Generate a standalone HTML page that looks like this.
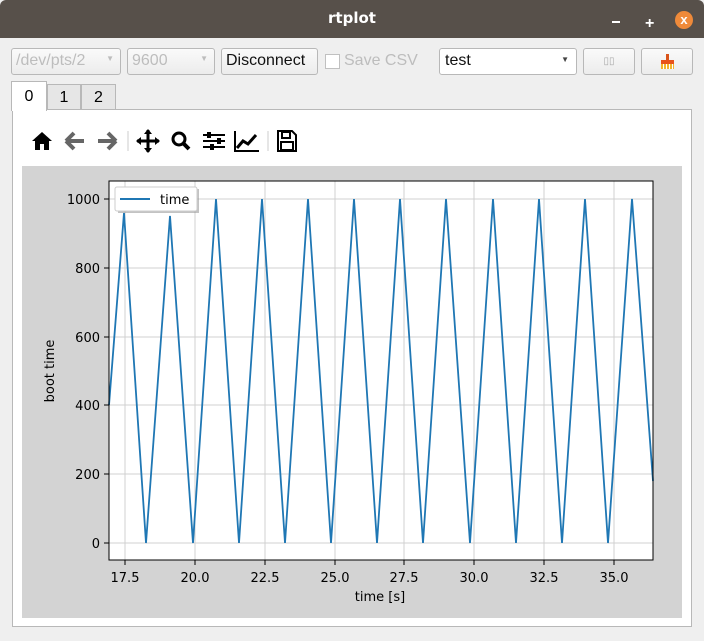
<!DOCTYPE html>
<html><head><style>
body{margin:0;width:704px;height:641px;background:#efefef;font-family:"Liberation Sans","DejaVu Sans",sans-serif;position:relative;overflow:hidden}
.a{position:absolute}
.btn{position:absolute;border:1px solid #b8b8b8;border-radius:3px;background:linear-gradient(#fafafa,#ececec);box-sizing:border-box;font-size:16px}
.dis{color:#bdbdbd}
.tab{position:absolute;border:1px solid #b8b8b8;border-bottom:none;box-sizing:border-box;font-size:16px;text-align:center;background:#e6e6e6}
</style></head><body>
<div class="a" style="left:0;top:0;width:704px;height:38px;background:#57504a;border-radius:6px 6px 0 0"></div>
<div class="a" style="left:0;top:9px;width:704px;text-align:center;color:#fff;font-weight:bold;font-size:15px;font-family:'DejaVu Sans',sans-serif">rtplot</div>
<div class="a" style="left:612px;top:21px;width:8px;height:2px;background:#fff"></div>
<div class="a" style="left:645px;top:15px;color:#fff;font-weight:bold;font-size:16px">+</div>
<div class="a" style="left:675px;top:11px;width:18px;height:18px;border-radius:50%;background:#ef8a3a;color:#fff;font-size:13px;font-weight:bold;text-align:center;line-height:18px">x</div>

<div class="btn dis" style="left:11px;top:48px;width:110px;height:27px;padding:3px 4px">/dev/pts/2<span style="position:absolute;right:6px;top:5px;font-size:8px">▼</span></div>
<div class="btn dis" style="left:127px;top:48px;width:88px;height:27px;padding:3px 4px">9600<span style="position:absolute;right:6px;top:5px;font-size:8px">▼</span></div>
<div class="btn" style="left:221px;top:48px;width:97px;height:27px;padding:3px 4px;color:#111">Disconnect</div>
<div class="a" style="left:325px;top:54px;width:13px;height:13px;border:1px solid #c0c0c0;background:#fff"></div>
<div class="a dis" style="left:344px;top:52px;font-size:16px">Save CSV</div>
<div class="btn" style="left:439px;top:48px;width:138px;height:27px;padding:3px 5px;color:#111;background:#fff">test<span style="position:absolute;right:7px;top:6px;font-size:8px;color:#444">▼</span></div>
<div class="btn" style="left:583px;top:48px;width:52px;height:27px;text-align:center;color:#aaa;font-size:10px;line-height:25px">▯▯</div>
<div class="btn" style="left:641px;top:48px;width:52px;height:27px"><div class="a" style="left:24px;top:5px;width:3px;height:7px;background:#d9541a"></div><div class="a" style="left:19px;top:11px;width:13px;height:4px;background:#e8531c"></div><div class="a" style="left:19px;top:15px;width:13px;height:5px;background:repeating-linear-gradient(90deg,#f3b42c 0 2px,#fff 2px 3px)"></div></div>

<div class="a" style="left:12px;top:109px;width:680px;height:518px;background:#fff;border:1px solid #b8b8b8;box-sizing:border-box"></div>
<div class="tab" style="left:11px;top:81px;width:36px;height:30px;background:#fff;line-height:30px">0</div>
<div class="tab" style="left:47px;top:84px;width:34px;height:25px;line-height:25px">1</div>
<div class="tab" style="left:81px;top:84px;width:35px;height:25px;line-height:25px">2</div>

<svg class="a" style="left:28px;top:126px" width="280" height="30" viewBox="0 0 280 30">
<path d="M4 15 L14 6 L24 15 L21 15 L21 24 L16 24 L16 18 L12 18 L12 24 L7 24 L7 15Z" fill="#000"/>
<path d="M38 15 L46 7 M38 15 L46 23 M38 15 L56 15" stroke="#666" stroke-width="4" fill="none"/>
<path d="M88 15 L80 7 M88 15 L80 23 M88 15 L70 15" stroke="#666" stroke-width="4" fill="none"/>
<line x1="100" y1="5" x2="100" y2="25" stroke="#ccc"/>
<path d="M120 4 V26 M109 15 H131" stroke="#000" stroke-width="3"/><path d="M120 3 L116 8 H124Z M120 27 L116 22 H124Z M108 15 L113 11 V19Z M132 15 L127 11 V19Z" fill="#000"/>
<circle cx="151" cy="13" r="6" stroke="#000" stroke-width="3" fill="none"/><path d="M155 17 L161 23" stroke="#000" stroke-width="4"/>
<path d="M175 9 H197 M175 15 H197 M175 21 H197" stroke="#000" stroke-width="2"/><rect x="179" y="6" width="4" height="6" fill="#000"/><rect x="189" y="12" width="4" height="6" fill="#000"/><rect x="182" y="18" width="4" height="6" fill="#000"/>
<path d="M207 5 V25 H231" stroke="#000" stroke-width="2" fill="none"/><path d="M209 22 L215 15 L220 18 L228 9" stroke="#000" stroke-width="3" fill="none"/>
<line x1="240" y1="5" x2="240" y2="25" stroke="#ccc"/>
<path d="M250 5 H264 L268 9 V25 H250Z" stroke="#000" stroke-width="2" fill="none"/><rect x="254" y="6" width="8" height="6" stroke="#000" stroke-width="2" fill="none"/><rect x="253" y="16" width="12" height="8" stroke="#000" stroke-width="2" fill="none"/>
</svg>

<svg class="a" style="left:22px;top:166px" width="660" height="452" viewBox="22 166 660 452" font-family="DejaVu Sans, sans-serif" font-size="13">
<rect x="22" y="166" width="660" height="452" fill="#d3d3d3"/>
<rect x="109" y="181" width="544" height="379" fill="#fff"/>
<g stroke="#d0d0d0" stroke-width="1">
<line x1="125" y1="181" x2="125" y2="560"/><line x1="195" y1="181" x2="195" y2="560"/><line x1="265" y1="181" x2="265" y2="560"/><line x1="335" y1="181" x2="335" y2="560"/><line x1="404" y1="181" x2="404" y2="560"/><line x1="474" y1="181" x2="474" y2="560"/><line x1="544" y1="181" x2="544" y2="560"/><line x1="614" y1="181" x2="614" y2="560"/>
<line x1="109" y1="543" x2="653" y2="543"/><line x1="109" y1="474" x2="653" y2="474"/><line x1="109" y1="405" x2="653" y2="405"/><line x1="109" y1="337" x2="653" y2="337"/><line x1="109" y1="268" x2="653" y2="268"/><line x1="109" y1="199" x2="653" y2="199"/>
</g>
<polyline fill="none" stroke="#1f77b4" stroke-width="1.8" points="109,405 124,213 146,543 170,216 193,543 216,199 239,543 262,199 285,543 308,199 331,543 354,199 377,543 400,199 423,543 446,199 470,543 493,199 516,543 539,199 562,543 585,199 608,543 632,199 653,481"/>
<rect x="109" y="181" width="544" height="379" fill="none" stroke="#000" stroke-width="1"/>
<rect x="118" y="189" width="81" height="24" fill="#888" opacity=".5"/>
<rect x="115" y="187" width="82" height="24" rx="2" fill="#fff" stroke="#ccc"/>
<line x1="120" y1="199" x2="150" y2="199" stroke="#1f77b4" stroke-width="2"/>
<text x="160" y="204">time</text>
<g stroke="#000"><line x1="104" y1="543" x2="109" y2="543"/><line x1="104" y1="474" x2="109" y2="474"/><line x1="104" y1="405" x2="109" y2="405"/><line x1="104" y1="337" x2="109" y2="337"/><line x1="104" y1="268" x2="109" y2="268"/><line x1="104" y1="199" x2="109" y2="199"/>
<line x1="125" y1="560" x2="125" y2="565"/><line x1="195" y1="560" x2="195" y2="565"/><line x1="265" y1="560" x2="265" y2="565"/><line x1="335" y1="560" x2="335" y2="565"/><line x1="404" y1="560" x2="404" y2="565"/><line x1="474" y1="560" x2="474" y2="565"/><line x1="544" y1="560" x2="544" y2="565"/><line x1="614" y1="560" x2="614" y2="565"/></g>
<g text-anchor="end"><text x="100" y="548">0</text><text x="100" y="479">200</text><text x="100" y="410">400</text><text x="100" y="342">600</text><text x="100" y="273">800</text><text x="100" y="204">1000</text></g>
<g text-anchor="middle"><text x="125" y="582">17.5</text><text x="195" y="582">20.0</text><text x="265" y="582">22.5</text><text x="335" y="582">25.0</text><text x="404" y="582">27.5</text><text x="474" y="582">30.0</text><text x="544" y="582">32.5</text><text x="614" y="582">35.0</text>
<text x="380" y="601">time [s]</text>
<text transform="translate(54 371) rotate(-90)">boot time</text></g>
</svg>
</body></html>
